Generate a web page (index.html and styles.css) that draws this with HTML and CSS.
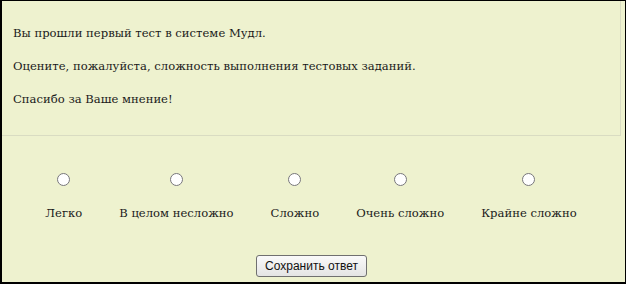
FILE: index.html
```html
<!DOCTYPE html>
<html lang="ru">
<head>
    <meta charset="UTF-8">
    <title>Опрос</title>
    <link rel="stylesheet" href="styles.css">
</head>
<body>
    <div class="frame">
        <div class="intro">
            <p>Вы прошли первый тест в системе Мудл.</p>
            <p>Оцените, пожалуйста, сложность выполнения тестовых заданий.</p>
            <p>Спасибо за Ваше мнение!</p>
        </div>
        <form class="rating">
            <div class="options">
                <label class="option"><input type="radio" name="level" value="1"><span>Легко</span></label>
                <label class="option"><input type="radio" name="level" value="2"><span>В целом несложно</span></label>
                <label class="option"><input type="radio" name="level" value="3"><span>Сложно</span></label>
                <label class="option"><input type="radio" name="level" value="4"><span>Очень сложно</span></label>
                <label class="option"><input type="radio" name="level" value="5"><span>Крайне сложно</span></label>
            </div>
            <div class="actions">
                <button type="submit" class="save-btn">Сохранить ответ</button>
            </div>
        </form>
    </div>
</body>
</html>
```

FILE: styles.css
```css
html, body {
    margin: 0; padding: 0; width: 100%; height: 100%;
    background: #eef2cf;
    font-family: 'DejaVu Serif', 'Liberation Serif', serif;
    color: #1a1a1a;
}
.frame {
    box-sizing: border-box; height: 284px;
    border: 1px solid #000; border-left-width: 2px; border-bottom-width: 2px;
    display: flex; flex-direction: column;
}
.intro {
    height: 135px; box-sizing: border-box;
    margin-right: 4px; padding: 25px 11px 0;
    border-right: 1px solid #d9dcc2; border-bottom: 1px solid #d9dcc2;
}
.intro p {
    margin: 0 0 19px; font-size: 11.6px; line-height: 14px;
}
.rating {
    flex: 1; display: flex; flex-direction: column; align-items: center;
}
.options {
    display: flex; gap: 37px; margin-top: 37px; margin-left: -5px;
}
.option {
    display: flex; flex-direction: column; align-items: center; gap: 20px;
    font-size: 11.6px;
}
.option input {
    margin: 0; width: 13px; height: 13px;
}
.actions {
    margin-top: 35px; margin-left: -4px;
}
.save-btn {
    font-family: 'Liberation Sans', Arial, sans-serif; font-size: 12px;
    padding: 2px 8px; height: 22px;
    background: linear-gradient(#fafafa, #e4e4e4);
    border: 1px solid #707070; border-radius: 3px; color: #111;
}
```
